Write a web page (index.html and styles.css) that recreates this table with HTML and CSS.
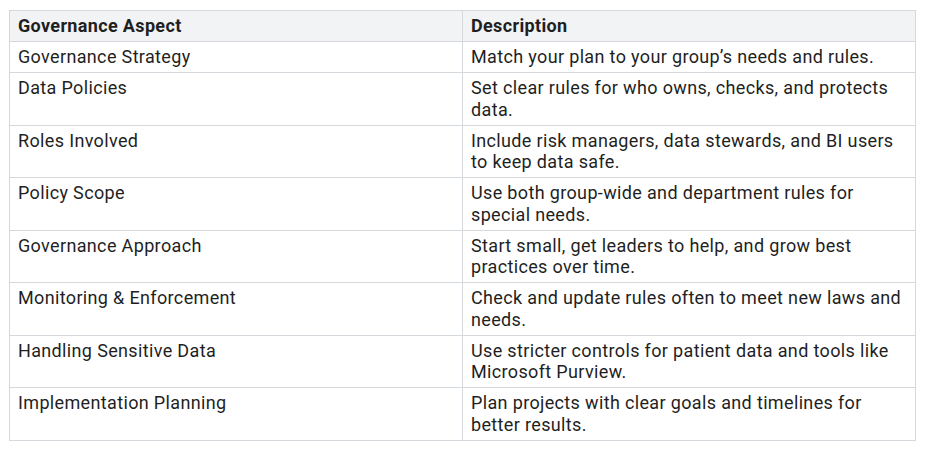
FILE: index.html
```html
<!DOCTYPE html>
<html>
<head>
<meta charset="utf-8">
<link rel="stylesheet" href="styles.css">
</head>
<body>
<table class="gov-table">
  <thead>
    <tr><th>Governance Aspect</th><th>Description</th></tr>
  </thead>
  <tbody>
    <tr><td>Governance Strategy</td><td>Match your plan to your group’s needs and rules.</td></tr>
    <tr><td>Data Policies</td><td>Set clear rules for who owns, checks, and protects data.</td></tr>
    <tr><td>Roles Involved</td><td>Include risk managers, data stewards, and BI users to keep data safe.</td></tr>
    <tr><td>Policy Scope</td><td>Use both group-wide and department rules for special needs.</td></tr>
    <tr><td>Governance Approach</td><td>Start small, get leaders to help, and grow best practices over time.</td></tr>
    <tr><td>Monitoring &amp; Enforcement</td><td>Check and update rules often to meet new laws and needs.</td></tr>
    <tr><td>Handling Sensitive Data</td><td>Use stricter controls for patient data and tools like Microsoft Purview.</td></tr>
    <tr><td>Implementation Planning</td><td>Plan projects with clear goals and timelines for better results.</td></tr>
  </tbody>
</table>
</body>
</html>
```

FILE: styles.css
```css
html, body {
  margin: 0;
  padding: 0;
  background: #ffffff;
}
body {
  padding: 10px 9px;
  font-family: Roboto, "Liberation Sans", sans-serif;
  color: #1f1f1f;
}
.gov-table {
  width: 907px;
  border-collapse: collapse;
  table-layout: fixed;
  font-size: 18px;
  letter-spacing: 0.35px;
  line-height: 21.5px;
}
.gov-table th,
.gov-table td {
  border: 1px solid #d5d9de;
  padding: 4px 8px 4.5px;
  text-align: left;
  vertical-align: top;
}
.gov-table th {
  background: #f1f3f5;
  font-weight: 700;
}
```
